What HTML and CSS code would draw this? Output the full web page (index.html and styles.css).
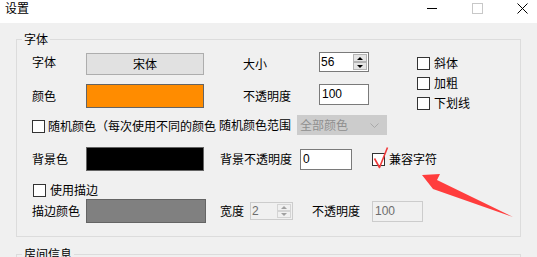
FILE: index.html
```html
<!DOCTYPE html>
<html lang="zh-CN">
<head>
    <meta charset="UTF-8">
    <title>设置</title>
    <link rel="stylesheet" href="styles.css">
</head>
<body>

<!-- Title Bar -->
<div class="titlebar">
    <span class="title">设置</span>
    <div class="win-btns">
        <svg width="11" height="11" viewBox="0 0 11 11"><line x1="0" y1="5.5" x2="10" y2="5.5" stroke="#000" stroke-width="1"/></svg>
        <svg width="11" height="11" viewBox="0 0 11 11"><rect x="0.5" y="0.5" width="10" height="10" fill="none" stroke="#c8c8c8" stroke-width="1"/></svg>
        <svg width="11" height="11" viewBox="0 0 11 11"><path d="M0.5 0.5 L10.5 10.5 M10.5 0.5 L0.5 10.5" stroke="#000" stroke-width="1"/></svg>
    </div>
</div>

<div class="dialog">
    <!-- Font Group -->
    <fieldset class="group">
        <legend>字体</legend>
        <div class="group-body">
            <div class="row r1">
                <span class="label up">字体</span>
                <div class="btn">宋体</div>
                <span class="field-label">大小</span>
                <div class="spin up2">
                    <span class="val">56</span>
                    <div class="spin-arrows">
                        <span class="arr"><i class="tri-up"></i></span>
                        <span class="arr"><i class="tri-down"></i></span>
                    </div>
                </div>
            </div>

            <div class="styles">
                <label class="check"><span class="box"></span>斜体</label>
                <label class="check"><span class="box"></span>加粗</label>
                <label class="check"><span class="box"></span>下划线</label>
            </div>

            <div class="row r2">
                <span class="label">颜色</span>
                <div class="swatch orange"></div>
                <span class="field-label">不透明度</span>
                <div class="input top">100</div>
            </div>

            <div class="row r3">
                <label class="check random"><span class="box"></span><span class="long-text">随机颜色（每次使用不同的颜色</span></label>
                <span class="range-label">随机颜色范围</span>
                <div class="select">
                    <span>全部颜色</span>
                    <svg width="9" height="5" viewBox="0 0 9 5"><polyline points="0.5,0.5 4.5,4.5 8.5,0.5" fill="none" stroke="#a9a9a9" stroke-width="1"/></svg>
                </div>
            </div>

            <div class="row r4">
                <span class="label">背景色</span>
                <div class="swatch black"></div>
                <span class="bg-label">背景不透明度</span>
                <div class="input wide">0</div>
                <label class="check compat">
                    <span class="box marked">
                        <svg class="mark" width="20" height="24" viewBox="0 0 20 24"><polyline points="3.5,12.5 8.5,21.5 16.5,1.5" fill="none" stroke="#f03a3a" stroke-width="1.6" stroke-linejoin="round"/></svg>
                    </span>兼容字符
                </label>
            </div>

            <div class="row r5">
                <label class="check outline"><span class="box"></span>使用描边</label>
            </div>

            <div class="row r6">
                <span class="label">描边颜色</span>
                <div class="swatch gray"></div>
                <span class="width-label">宽度</span>
                <div class="spin disabled small">
                    <span class="val">2</span>
                    <div class="spin-arrows">
                        <span class="arr"><i class="tri-up"></i></span>
                        <span class="arr"><i class="tri-down"></i></span>
                    </div>
                </div>
                <span class="opacity-label">不透明度</span>
                <div class="input disabled">100</div>
            </div>
        </div>
    </fieldset>

    <!-- Room Info Group -->
    <fieldset class="group second">
        <legend>房间信息</legend>
    </fieldset>
</div>

<!-- Annotation arrow -->
<svg class="arrow" width="100" height="54" viewBox="0 0 100 54">
    <polygon points="4,7 22,6 19,12 95,49 15,21" fill="#ff3d3d"/>
</svg>

</body>
</html>
```

FILE: styles.css
```css
/* Global */
* {
    margin: 0;
    padding: 0;
    box-sizing: border-box;
}

body {
    width: 537px;
    height: 257px;
    overflow: hidden;
    position: relative;
    background: #f0f0f0;
    color: #000;
    font: 12px/14px "Noto Sans CJK SC", sans-serif;
}

/* Title Bar */
.titlebar {
    height: 23px;
    background: #fff;
    display: flex;
    justify-content: space-between;
    padding: 1px 9px 0 5px;
}

.win-btns {
    display: flex;
    gap: 34px;
    padding-top: 2px;
}

.win-btns svg {
    display: block;
}

/* Group boxes */
.dialog {
    padding: 9px 16px 0 16px;
}

.group {
    width: 505px;
    border: 1px solid #dcdcdc;
}

.group legend {
    margin-left: 5px;
    padding: 0 2px;
    line-height: 14px;
}

.group.second {
    margin-top: 10px;
    height: 20px;
}

.group-body {
    display: grid;
    grid-template-columns: 385px auto;
    padding: 6px 0 13px 15px;
}

/* Rows */
.row {
    display: flex;
    align-items: center;
    grid-column: 1;
}

.r1 { height: 24px; }
.r2 { height: 24px; margin-top: 8px; }
.r3 { height: 20px; margin-top: 7px; }
.r4 { height: 24px; margin-top: 12px; grid-column: 1 / -1; }
.r5 { height: 16px; margin-top: 11px; grid-column: 1 / -1; }
.r6 { height: 24px; margin-top: 1px; grid-column: 1 / -1; }

.label {
    width: 54px;
    flex: none;
}

.up { margin-top: -4px; }
.up2 { margin-top: -4px; }

.field-label {
    width: 76px;
    margin-left: 39px;
    flex: none;
}

.bg-label {
    width: 80px;
    margin-left: 16px;
    flex: none;
}

.width-label {
    width: 30px;
    margin-left: 14px;
    flex: none;
}

.opacity-label {
    width: 60px;
    margin-left: 19px;
    flex: none;
}

.range-label {
    width: 78px;
    flex: none;
}

/* Button */
.btn {
    width: 118px;
    height: 22px;
    background: #e1e1e1;
    border: 1px solid #adadad;
    text-align: center;
    line-height: 20px;
}

/* Colour swatches */
.swatch {
    width: 118px;
    height: 24px;
    border: 1px solid #646464;
    flex: none;
}

.orange { background: #ff8c00; }
.black { background: #000; }
.gray { background: #808080; width: 120px; }

/* Inputs */
.input {
    width: 50px;
    height: 21px;
    border: 1px solid #7a7a7a;
    background: #fff;
    padding-left: 2px;
    font: 12px/19px "Liberation Sans", sans-serif;
    flex: none;
}

.input.top { margin-top: -3px; }
.input.wide { width: 52px; }

.input.disabled {
    width: 51px;
    border-color: #cccccc;
    background: #f0f0f0;
    color: #6d6d6d;
}

/* Spin box */
.spin {
    width: 50px;
    height: 20px;
    border: 1px solid #7a7a7a;
    background: #fff;
    display: flex;
    flex: none;
    font: 12px/18px "Liberation Sans", sans-serif;
}

.spin .val {
    flex: 1;
    padding-left: 1px;
}

.spin-arrows {
    width: 15px;
    display: flex;
    flex-direction: column;
    padding: 1px 1px 1px 0;
}

.spin-arrows .arr {
    flex: 1;
    background: #e5e5e5;
    border: 1px solid #b4b4b4;
    display: flex;
    align-items: center;
    justify-content: center;
}

.tri-up {
    border-left: 3px solid transparent;
    border-right: 3px solid transparent;
    border-bottom: 3px solid #000;
}

.tri-down {
    border-left: 3px solid transparent;
    border-right: 3px solid transparent;
    border-top: 3px solid #000;
}

.spin.small {
    width: 43px;
    height: 18px;
    line-height: 16px;
}

.spin.disabled {
    border-color: #cccccc;
    background: #f0f0f0;
    color: #6d6d6d;
}

.spin.disabled .arr {
    background: #f0f0f0;
    border-color: #d4d4d4;
}

.spin.disabled .tri-up { border-bottom-color: #a0a0a0; }
.spin.disabled .tri-down { border-top-color: #a0a0a0; }

/* Dropdown */
.select {
    width: 90px;
    height: 20px;
    background: #cccccc;
    color: #8f8f8f;
    display: flex;
    align-items: center;
    justify-content: space-between;
    padding: 0 8px 0 3px;
    flex: none;
}

/* Checkboxes */
.check {
    display: flex;
    align-items: center;
    gap: 4px;
    white-space: nowrap;
}

.box {
    width: 13px;
    height: 13px;
    border: 1px solid #333;
    background: #fff;
    flex: none;
}

.styles {
    grid-column: 2;
    grid-row: 1 / 4;
    display: flex;
    flex-direction: column;
    gap: 6px;
    padding-top: 4px;
}

.random {
    gap: 3px;
    margin-top: 2px;
}

.long-text {
    width: 171px;
    flex: none;
    text-spacing-trim: space-all;
}

.compat {
    margin-left: 20px;
}

.outline {
    margin-left: 1px;
}

.box.marked {
    position: relative;
}

.mark {
    position: absolute;
    left: -2px;
    top: -8px;
}

/* Annotation arrow */
.arrow {
    position: absolute;
    left: 418px;
    top: 168px;
}
```
